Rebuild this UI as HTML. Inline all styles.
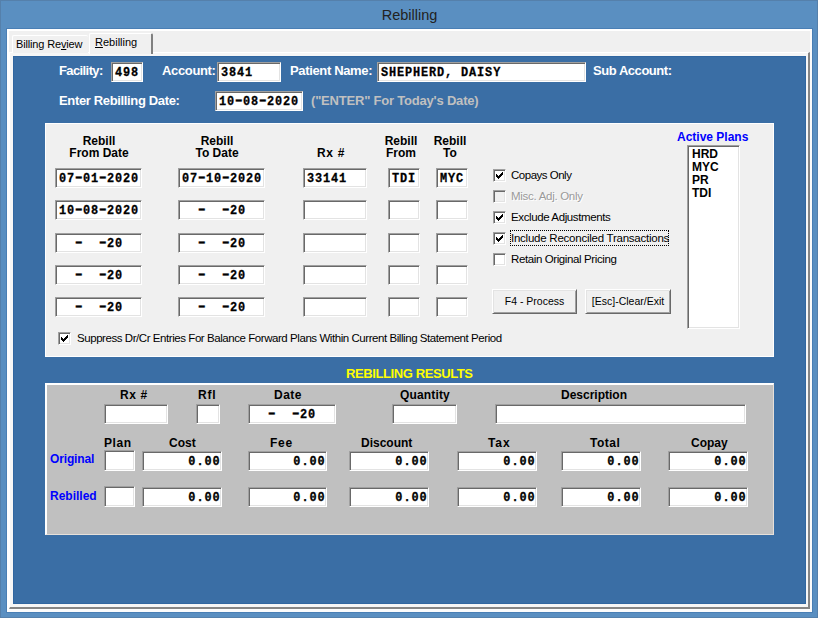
<!DOCTYPE html>
<html><head><meta charset="utf-8">
<style>
*{box-sizing:border-box;margin:0;padding:0}
html,body{width:818px;height:618px;overflow:hidden}
body{position:relative;background:#5a8fc1;font-family:"Liberation Sans",sans-serif;}
.a{position:absolute}
#frame{left:0;top:0;width:818px;height:618px;border:1px solid #5580ab}
#title{left:0;width:818px;top:5px;text-align:center;font-size:14.5px;color:#222;line-height:20px;padding-left:1px}
#client{left:7px;top:29px;width:805px;height:583px;background:#f0f0f0;border-left:2px solid #fff;border-top:2px solid #fff;border-right:2px solid #fcfcfc;border-bottom:3px solid #fcfcfc;box-shadow:0 0 0 1px #4a7fb5}
.tab{font-size:11px;line-height:13px;color:#000;background:#f0f0f0;border-top:1px solid #fff;border-left:1px solid #fff;border-radius:2px 2px 0 0}
#pane{left:9px;top:52px;width:801px;height:557px;background:#f6f6f6;border-top:1px solid #fff;border-left:1px solid #fff;border-right:2px solid #858585;border-bottom:2px solid #858585}
#blue{left:13px;top:56px;width:793px;height:548px;background:#3a6ea5;box-shadow:inset 0 0 0 1px #3066a0}
.lb{font-weight:bold;font-size:13px;letter-spacing:-0.35px;color:#fff;line-height:14px;white-space:pre}
.hd{font-weight:bold;font-size:12px;color:#000;line-height:12px;text-align:center;white-space:pre;margin-top:1px}
.tb{background:#fff;border-top:1px solid #a0a0a0;border-left:1px solid #a0a0a0;border-right:1px solid #fff;border-bottom:1px solid #fff;box-shadow:inset 1px 1px 0 #696969,inset -1px -1px 0 #e3e3e3;font-family:"Liberation Mono",monospace;font-weight:bold;font-size:13.33px;line-height:16px;color:#000;white-space:pre;padding:2px 0 0 3px}
.m{display:inline-block;transform:scaleX(0.88);transform-origin:0 0;font-size:13.5px;letter-spacing:1px;-webkit-text-stroke:0.3px #000}
.r .m{transform-origin:100% 0;margin-right:-1px}
.r{text-align:right;padding-left:0;padding-right:2px}
#panel1{left:45px;top:123px;width:729px;height:234px;background:#f0f0f0;border:1px solid #fff}
#panel2{left:45px;top:383px;width:729px;height:152px;background:#c0c0c0;border-top:2px solid #fff;border-left:2px solid #fff;border-right:1px solid #e6e0da;border-bottom:1px solid #e6e0da}
.cb{width:13px;height:13px;background:#fff;border-top:1px solid #a0a0a0;border-left:1px solid #a0a0a0;border-right:1px solid #fff;border-bottom:1px solid #fff;box-shadow:inset 1px 1px 0 #696969,inset -1px -1px 0 #e3e3e3}
.cb svg{position:absolute;left:-1px;top:-1px}
.cl{font-size:11.5px;line-height:13px;color:#000;white-space:pre}
.btn{background:#f0f0f0;border-top:1px solid #fff;border-left:1px solid #fff;border-right:1px solid #696969;border-bottom:1px solid #696969;box-shadow:inset 1px 1px 0 #e3e3e3,inset -1px -1px 0 #a0a0a0;font-size:10.5px;text-align:center;line-height:22px;color:#000;white-space:pre}
.bl{font-weight:bold;font-size:12px;color:#0000ff;line-height:14px;white-space:pre}
</style></head><body>
<div class="a" id="frame"></div>
<div class="a" id="title">Rebilling</div>
<div class="a" id="client"></div>
<div class="a" id="pane"></div>
<div class="a tab" style="left:12px;top:35px;width:76px;height:18px;padding:2px 0 0 3px;letter-spacing:-0.15px">Billing Re<u>v</u>iew</div>
<div class="a tab" style="left:89px;top:33px;width:64px;height:21px;padding:2px 0 0 5px;border-right:2px solid #808080"><u>R</u>ebilling</div>
<div class="a" id="blue"></div>

<!-- header -->
<div class="a lb" style="left:59px;top:64px;letter-spacing:-0.6px">Facility:</div>
<div class="a tb" style="left:111px;top:62px;width:32px;height:20px"><span class="m">498</span></div>
<div class="a lb" style="left:162px;top:64px">Account:</div>
<div class="a tb" style="left:217px;top:62px;width:64px;height:20px"><span class="m">3841</span></div>
<div class="a lb" style="left:290px;top:64px">Patient Name:</div>
<div class="a tb" style="left:377px;top:62px;width:209px;height:20px"><span class="m">SHEPHERD, DAISY</span></div>
<div class="a lb" style="left:593px;top:64px;letter-spacing:-0.45px">Sub Account:</div>
<div class="a lb" style="left:59px;top:94px">Enter Rebilling Date:</div>
<div class="a tb" style="left:215px;top:91px;width:88px;height:20px"><span class="m">10&minus;08&minus;2020</span></div>
<div class="a lb" style="left:311px;top:94px;color:#c0c0c0;letter-spacing:-0.2px">("ENTER" For Today's Date)</div>

<!-- panel 1 -->
<div class="a" id="panel1"></div>
<div class="a hd" style="left:58px;top:134px;width:82px">Rebill
From Date</div>
<div class="a hd" style="left:176px;top:134px;width:82px">Rebill
To Date</div>
<div class="a hd" style="left:290px;top:146px;width:82px;letter-spacing:0.7px">Rx #</div>
<div class="a hd" style="left:371px;top:134px;width:60px">Rebill
From</div>
<div class="a hd" style="left:420px;top:134px;width:60px">Rebill
To</div>

<div class="a tb" style="left:55px;top:168px;width:87px;height:20px"><span class="m">07&minus;01&minus;2020</span></div>
<div class="a tb" style="left:178px;top:168px;width:87px;height:20px"><span class="m">07&minus;10&minus;2020</span></div>
<div class="a tb" style="left:303px;top:168px;width:64px;height:20px"><span class="m">33141</span></div>
<div class="a tb" style="left:388px;top:168px;width:32px;height:20px"><span class="m">TDI</span></div>
<div class="a tb" style="left:436px;top:168px;width:32px;height:20px"><span class="m">MYC</span></div>

<div class="a tb" style="left:55px;top:200px;width:87px;height:20px"><span class="m">10&minus;08&minus;2020</span></div>
<div class="a tb" style="left:178px;top:200px;width:87px;height:20px"><span class="m">  &minus;  &minus;20</span></div>
<div class="a tb" style="left:303px;top:200px;width:64px;height:20px"></div>
<div class="a tb" style="left:388px;top:200px;width:32px;height:20px"></div>
<div class="a tb" style="left:436px;top:200px;width:32px;height:20px"></div>

<div class="a tb" style="left:55px;top:233px;width:87px;height:20px"><span class="m">  &minus;  &minus;20</span></div>
<div class="a tb" style="left:178px;top:233px;width:87px;height:20px"><span class="m">  &minus;  &minus;20</span></div>
<div class="a tb" style="left:303px;top:233px;width:64px;height:20px"></div>
<div class="a tb" style="left:388px;top:233px;width:32px;height:20px"></div>
<div class="a tb" style="left:436px;top:233px;width:32px;height:20px"></div>

<div class="a tb" style="left:55px;top:265px;width:87px;height:20px"><span class="m">  &minus;  &minus;20</span></div>
<div class="a tb" style="left:178px;top:265px;width:87px;height:20px"><span class="m">  &minus;  &minus;20</span></div>
<div class="a tb" style="left:303px;top:265px;width:64px;height:20px"></div>
<div class="a tb" style="left:388px;top:265px;width:32px;height:20px"></div>
<div class="a tb" style="left:436px;top:265px;width:32px;height:20px"></div>

<div class="a tb" style="left:55px;top:297px;width:87px;height:20px"><span class="m">  &minus;  &minus;20</span></div>
<div class="a tb" style="left:178px;top:297px;width:87px;height:20px"><span class="m">  &minus;  &minus;20</span></div>
<div class="a tb" style="left:303px;top:297px;width:64px;height:20px"></div>
<div class="a tb" style="left:388px;top:297px;width:32px;height:20px"></div>
<div class="a tb" style="left:436px;top:297px;width:32px;height:20px"></div>

<!-- checkboxes -->
<div class="a cb" style="left:493px;top:169px"><svg width="13" height="13" shape-rendering="crispEdges"><path d="M3 5h1v3h-1zM4 6h1v3h-1zM5 7h1v3h-1zM6 6h1v3h-1zM7 5h1v3h-1zM8 4h1v3h-1zM9 3h1v3h-1z" fill="#000"/></svg></div>
<div class="a cl" style="left:511px;top:169px;letter-spacing:-0.49px">Copays Only</div>
<div class="a cb" style="left:493px;top:190px;background:#f0f0f0"></div>
<div class="a cl" style="left:511px;top:190px;color:#9a9a9a;text-shadow:1px 1px 0 #fff;letter-spacing:-0.29px">Misc. Adj. Only</div>
<div class="a cb" style="left:493px;top:211px"><svg width="13" height="13" shape-rendering="crispEdges"><path d="M3 5h1v3h-1zM4 6h1v3h-1zM5 7h1v3h-1zM6 6h1v3h-1zM7 5h1v3h-1zM8 4h1v3h-1zM9 3h1v3h-1z" fill="#000"/></svg></div>
<div class="a cl" style="left:511px;top:211px;letter-spacing:-0.39px">Exclude Adjustments</div>
<div class="a cb" style="left:493px;top:232px"><svg width="13" height="13" shape-rendering="crispEdges"><path d="M3 5h1v3h-1zM4 6h1v3h-1zM5 7h1v3h-1zM6 6h1v3h-1zM7 5h1v3h-1zM8 4h1v3h-1zM9 3h1v3h-1z" fill="#000"/></svg></div>
<div class="a" style="left:510px;top:230px;width:159px;height:16px;border:1px dotted #000"></div>
<div class="a cl" style="left:511px;top:232px;letter-spacing:-0.24px">Include Reconciled Transactions</div>
<div class="a cb" style="left:493px;top:253px"></div>
<div class="a cl" style="left:511px;top:253px;letter-spacing:-0.39px">Retain Original Pricing</div>

<div class="a btn" style="left:492px;top:289px;width:85px;height:25px">F4 - Process</div>
<div class="a btn" style="left:585px;top:289px;width:86px;height:25px">[Esc]-Clear/Exit</div>

<div class="a bl" style="left:677px;top:130px">Active Plans</div>
<div class="a tb" style="left:687px;top:145px;width:53px;height:184px;font-family:'Liberation Sans',sans-serif;font-size:12px;line-height:13px;padding:2px 0 0 4px">HRD
MYC
PR
TDI</div>

<div class="a cb" style="left:58px;top:332px"><svg width="13" height="13" shape-rendering="crispEdges"><path d="M3 5h1v3h-1zM4 6h1v3h-1zM5 7h1v3h-1zM6 6h1v3h-1zM7 5h1v3h-1zM8 4h1v3h-1zM9 3h1v3h-1z" fill="#000"/></svg></div>
<div class="a cl" style="left:77px;top:332px;letter-spacing:-0.44px">Suppress Dr/Cr Entries For Balance Forward Plans Within Current Billing Statement Period</div>

<!-- results -->
<div class="a" style="left:346px;top:367px;font-weight:bold;font-size:13px;letter-spacing:-0.4px;line-height:14px;color:#ffff00;white-space:pre">REBILLING RESULTS</div>
<div class="a" id="panel2"></div>
<div class="a hd" style="left:120px;top:388px;letter-spacing:0.6px">Rx #</div>
<div class="a hd" style="left:198px;top:388px;letter-spacing:0.8px">Rfl</div>
<div class="a hd" style="left:274px;top:388px;letter-spacing:0.5px">Date</div>
<div class="a hd" style="left:400px;top:388px;letter-spacing:0.15px">Quantity</div>
<div class="a hd" style="left:561px;top:388px">Description</div>
<div class="a tb" style="left:104px;top:404px;width:64px;height:20px"></div>
<div class="a tb" style="left:196px;top:404px;width:24px;height:20px"></div>
<div class="a tb" style="left:248px;top:404px;width:88px;height:20px"><span class="m">  &minus;  &minus;20</span></div>
<div class="a tb" style="left:392px;top:404px;width:65px;height:20px"></div>
<div class="a tb" style="left:495px;top:404px;width:251px;height:20px"></div>

<div class="a hd" style="left:104px;top:436px;letter-spacing:0.6px">Plan</div>
<div class="a hd" style="left:169px;top:436px">Cost</div>
<div class="a hd" style="left:270px;top:436px;letter-spacing:0.7px">Fee</div>
<div class="a hd" style="left:361px;top:436px">Discount</div>
<div class="a hd" style="left:488px;top:436px;letter-spacing:0.9px">Tax</div>
<div class="a hd" style="left:590px;top:436px;letter-spacing:0.5px">Total</div>
<div class="a hd" style="left:691px;top:436px">Copay</div>
<div class="a bl" style="left:50px;top:452px;letter-spacing:-0.15px">Original</div>
<div class="a bl" style="left:50px;top:489px">Rebilled</div>

<div class="a tb" style="left:104px;top:450px;width:31px;height:21px"></div>
<div class="a tb r" style="left:142px;top:451px;width:80px;height:20px"><span class="m">0.00</span></div>
<div class="a tb r" style="left:248px;top:451px;width:79px;height:20px"><span class="m">0.00</span></div>
<div class="a tb r" style="left:349px;top:451px;width:80px;height:20px"><span class="m">0.00</span></div>
<div class="a tb r" style="left:457px;top:451px;width:80px;height:20px"><span class="m">0.00</span></div>
<div class="a tb r" style="left:561px;top:451px;width:80px;height:20px"><span class="m">0.00</span></div>
<div class="a tb r" style="left:668px;top:451px;width:80px;height:20px"><span class="m">0.00</span></div>

<div class="a tb" style="left:104px;top:486px;width:31px;height:21px"></div>
<div class="a tb r" style="left:142px;top:487px;width:80px;height:20px"><span class="m">0.00</span></div>
<div class="a tb r" style="left:248px;top:487px;width:79px;height:20px"><span class="m">0.00</span></div>
<div class="a tb r" style="left:349px;top:487px;width:80px;height:20px"><span class="m">0.00</span></div>
<div class="a tb r" style="left:457px;top:487px;width:80px;height:20px"><span class="m">0.00</span></div>
<div class="a tb r" style="left:561px;top:487px;width:80px;height:20px"><span class="m">0.00</span></div>
<div class="a tb r" style="left:668px;top:487px;width:80px;height:20px"><span class="m">0.00</span></div>
</body></html>
